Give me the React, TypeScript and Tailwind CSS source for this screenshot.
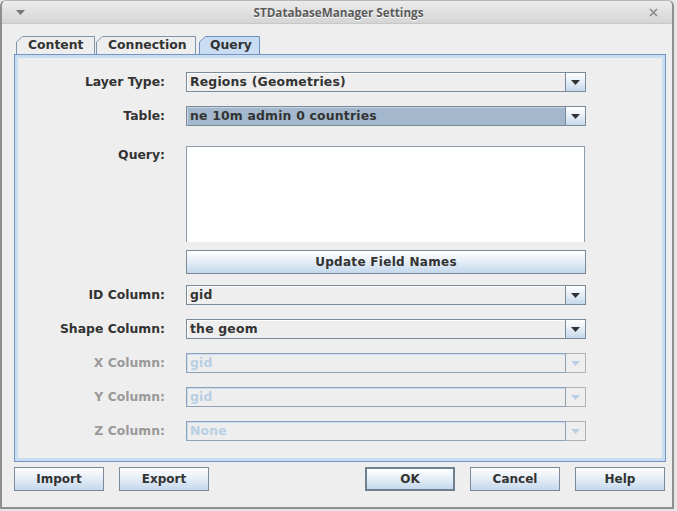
import React from 'react';

const FONT = { fontFamily: '"DejaVu Sans", sans-serif' };

const Arrow = ({ disabled }: { disabled?: boolean }) => (
  <svg width="9" height="5" viewBox="0 0 9 5">
    <path d="M0 0 H9 L4.5 5 Z" fill={disabled ? '#b8cfe5' : '#333333'} />
  </svg>
);

const Combo = ({ value, selected, disabled }: { value: string; selected?: boolean; disabled?: boolean }) => (
  <div className="flex h-[20px] w-[400px]">
    <div
      className={`flex-1 flex items-center pl-[3px] border text-[12.4px] font-bold leading-none tracking-[0.2px] ${
        disabled
          ? 'border-[#8fa2b8] bg-[#eeeeee] text-[#b8cfe5] shadow-[inset_1px_1px_0_#c8dcf1]'
          : selected
          ? 'border-[#7a8a99] bg-[#a3b8cc] text-[#333333] shadow-[inset_1px_1px_0_#c8d6e3]'
          : 'border-[#7a8a99] bg-[#eeeeee] text-[#333333] shadow-[inset_1px_1px_0_#ffffff]'
      }`}
    >
      {value}
    </div>
    <div
      className={`w-[20px] flex items-center justify-center border border-l-0 ${
        disabled
          ? 'border-[#b0b0b0] bg-[#eeeeee]'
          : 'border-[#7a8a99] bg-linear-to-b from-[#ffffff] via-[#e4edf6] to-[#c6d9ed]'
      }`}
    >
      <Arrow disabled={disabled} />
    </div>
  </div>
);

const Label = ({ text, disabled, top }: { text: string; disabled?: boolean; top?: boolean }) => (
  <div
    className={`w-[147px] text-right text-[12.4px] font-bold leading-none ${
      disabled ? 'text-[#999999]' : 'text-[#333333]'
    } ${top ? 'pt-[3px]' : ''}`}
  >
    {text}
  </div>
);

const Row = ({ children, className = '' }: { children: React.ReactNode; className?: string }) => (
  <div className={`flex gap-x-[21px] ${className}`}>{children}</div>
);

const Button = ({ text, focused, className = '' }: { text: string; focused?: boolean; className?: string }) => (
  <div
    className={`flex items-center justify-center h-[24px] text-[12px] font-bold text-[#333333] bg-linear-to-b from-[#ffffff] via-[#e4edf6] to-[#c4d8ec] ${
      focused ? 'border-2 border-[#6e7f90]' : 'border border-[#7a8a99]'
    } ${className}`}
  >
    {text}
  </div>
);

const Tab = ({ text, width, selected }: { text: string; width: number; selected?: boolean }) => (
  <div className="relative h-[18px] flex items-center" style={{ width }}>
    <svg className="absolute inset-0" width={width} height={18}>
      <path
        d={`M0.5 18 V6 L6.5 0.5 H${width - 0.5} V18`}
        fill={selected ? '#c8ddf2' : '#eeeeee'}
        stroke={selected ? '#6f8fbf' : '#7f94ab'}
      />
    </svg>
    <span className={`relative text-[12.4px] font-bold text-[#333333] leading-none ${selected ? 'pl-[11px]' : 'pl-[12px]'}`}>
      {text}
    </span>
  </div>
);

export default function App() {
  return (
    <div className="w-[677px] h-[511px] bg-[#e6e6e6]" style={FONT}>
      <div className="w-[674px] h-[509px] bg-[#eeeeee] border-x-2 border-b-2 border-[#8e8e8e] border-t border-t-[#b5b5b5] rounded-t-[6px] flex flex-col overflow-hidden">
        {/* title bar */}
        <div className="h-[23px] flex items-center justify-between px-[13px] bg-linear-to-b from-[#ececec] to-[#d5d5d5] border-b border-[#c8c8c8]">
          <svg width="9" height="5" viewBox="0 0 9 5" className="ml-[1px]">
            <path d="M0 0 H9 L4.5 5 Z" fill="#777777" />
          </svg>
          <div
            className="text-[11.7px] font-bold text-[#5b5b5b] ml-[3px] pt-[1px] [text-shadow:0_1px_0_#ffffff]"
            style={{ fontFamily: '"Open Sans", sans-serif' }}
          >
            STDatabaseManager Settings
          </div>
          <svg width="9" height="9" viewBox="0 0 9 9" className="mr-[1px]">
            <path d="M1 1 L8 8 M8 1 L1 8" stroke="#8a8a8a" strokeWidth="1.6" />
          </svg>
        </div>

        <div className="pl-[12px] pt-[12px] flex flex-col">
          {/* tabs */}
          <div className="flex gap-[1px] pl-[2px] h-[18px] items-end">
            <Tab text="Content" width={79} />
            <Tab text="Connection" width={100} />
            <div className="w-[1px]" />
            <Tab text="Query" width={61} selected />
          </div>

          {/* panel */}
          <div className="w-[652px] h-[408px] border border-[#7594c2]">
            <div className="h-full border-[3px] border-[#c8ddf2] pt-[14px] flex flex-col">
              <Row className="items-center">
                <Label text="Layer Type:" />
                <Combo value="Regions (Geometries)" />
              </Row>
              <Row className="items-center mt-[14px]">
                <Label text="Table:" />
                <Combo value="ne 10m admin 0 countries" selected />
              </Row>
              <Row className="items-start mt-[20px]">
                <Label text="Query:" top />
                <div className="w-[399px] h-[96px] bg-white border-x border-t border-[#8e9dab]" />
              </Row>
              <Row className="mt-[8px]">
                <div className="w-[147px]" />
                <Button text="Update Field Names" className="w-[400px] h-[23px] text-[12.4px] tracking-[0.3px]" />
              </Row>
              <Row className="items-center mt-[11px]">
                <Label text="ID Column:" />
                <Combo value="gid" />
              </Row>
              <Row className="items-center mt-[14px]">
                <Label text="Shape Column:" />
                <Combo value="the geom" />
              </Row>
              <Row className="items-center mt-[14px]">
                <Label text="X Column:" disabled />
                <Combo value="gid" disabled />
              </Row>
              <Row className="items-center mt-[14px]">
                <Label text="Y Column:" disabled />
                <Combo value="gid" disabled />
              </Row>
              <Row className="items-center mt-[14px]">
                <Label text="Z Column:" disabled />
                <Combo value="None" disabled />
              </Row>
            </div>
          </div>

          {/* bottom buttons */}
          <div className="flex mt-[5px] w-[651px]">
            <Button text="Import" className="w-[90px]" />
            <Button text="Export" className="w-[90px] ml-[15px]" />
            <div className="flex-1" />
            <Button text="OK" focused className="w-[90px]" />
            <Button text="Cancel" className="w-[90px] ml-[15px]" />
            <Button text="Help" className="w-[90px] ml-[15px]" />
          </div>
        </div>
      </div>
    </div>
  );
}
